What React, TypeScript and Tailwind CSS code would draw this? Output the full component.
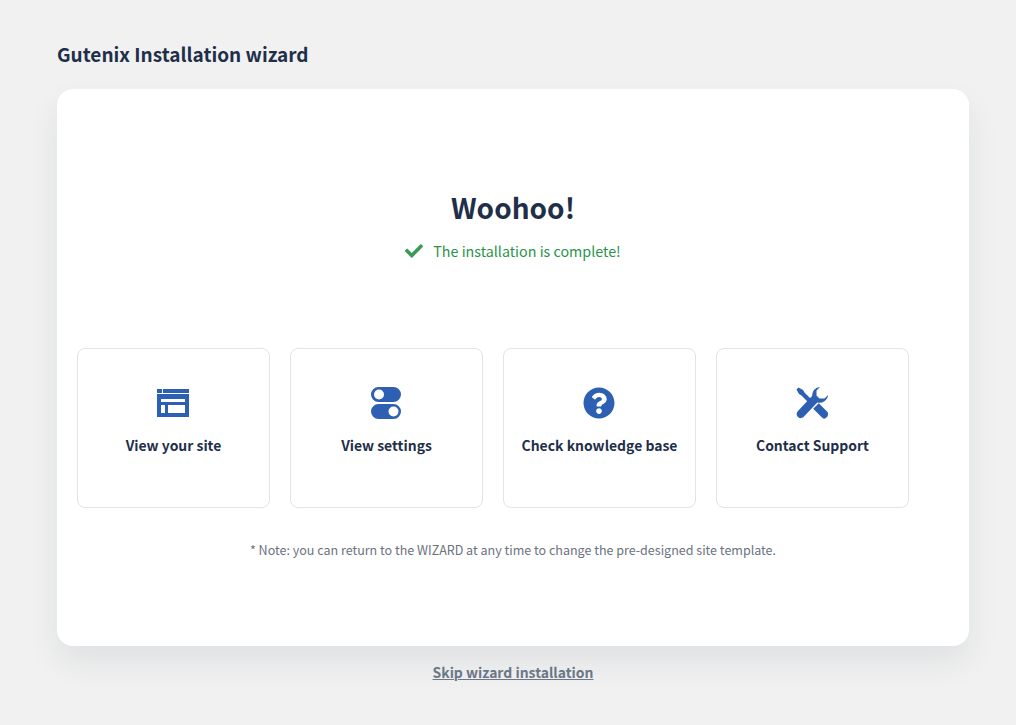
import { FaCheck, FaQuestionCircle } from 'react-icons/fa';

const SiteIcon = () => (
  <svg width="32" height="28" viewBox="0 0 32 28" fill="#2d5fb3">
    <rect x="0" y="0" width="5" height="4" />
    <rect x="6" y="0" width="26" height="4" />
    <path fillRule="evenodd" d="M0 5h32v23H0zM4 10v3h24v-3zM4 16v8h4v-8zM11 16v8h17v-8z" />
  </svg>
);

const ToggleIcon = () => (
  <svg width="30" height="32" viewBox="0 0 30 32" fill="#2d5fb3">
    <path fillRule="evenodd" d="M7.500 0h15a7.500 7.500 0 0 1 0 15h-15a7.500 7.500 0 0 1 0-15zM8 2.500a5 5 0 1 0 0 10a5 5 0 0 0 0-10z" />
    <path fillRule="evenodd" d="M7.500 17h15a7.500 7.500 0 0 1 0 15h-15a7.500 7.500 0 0 1 0-15zM22.500 19.500a5 5 0 1 0 0 10a5 5 0 0 0 0-10z" />
  </svg>
);

const ToolsIcon = () => (
  <svg width="32" height="32" viewBox="0 0 32 32" fill="#2d5fb3">
    <path d="M0.500 2.500L2.500 0.500L7 3L8.500 5.500L15 12L12 15L5.500 8.500L3 7z" />
    <path d="M22.800 16.200L31.500 25Q33 28 30.500 30.500Q28 33 25.500 30L17.200 21.800z" />
    <path d="M24 0L20.500 3.500V8.500L23.500 11.500H28.500L32 8A8.500 8.500 0 0 1 21.300 15.500L7.500 30Q5 32 2.500 30.500L1.500 29.500Q-0.200 27 1.500 24.500L16.100 9A8.500 8.500 0 0 1 24 0z" />
  </svg>
);

const LINKS = [
  { label: 'View your site', icon: <SiteIcon /> },
  { label: 'View settings', icon: <ToggleIcon /> },
  { label: 'Check knowledge base', icon: <FaQuestionCircle size={32} color="#2d5fb3" /> },
  { label: 'Contact Support', icon: <ToolsIcon /> },
];

export default function App() {
  return (
    <div className="min-h-[725px] bg-[#f1f1f1] pl-[57px] pr-[47px] pt-[39px] font-['Noto_Sans_CJK_SC','Liberation_Sans',sans-serif]">
      <h1 className="text-[19px] leading-[29px] font-semibold text-[#1f2f4a]">Gutenix Installation wizard</h1>

      <div className="mt-[21px] h-[557px] rounded-2xl bg-white shadow-[0_16px_32px_rgba(30,40,70,0.08)] px-[20px] pt-[96px]">
        <h2 className="text-center text-[28px] leading-[44px] font-semibold text-[#1f2f4a]">Woohoo!</h2>
        <div className="mt-[10px] flex items-center justify-center gap-[10px] text-[14.3px] leading-6 text-[#2b9348]">
          <FaCheck size={18} color="#3a9b57" />
          <span>The installation is complete!</span>
        </div>

        <div className="mt-[85px] flex gap-[20px]">
          {LINKS.map((link) => (
            <div key={link.label} className="flex h-[160px] w-[193px] flex-col items-center rounded-lg border border-[#e2e4ec] pt-[38px]">
              <div className="mr-px flex h-[32px] items-center justify-center">{link.icon}</div>
              <div className="mt-[15px] text-[13.95px] leading-[22px] font-semibold text-[#1f2f4a]">{link.label}</div>
            </div>
          ))}
        </div>

        <p className="mt-[31px] text-center text-[12.52px] leading-[21px] text-[#6b7280]">* Note: you can return to the WIZARD at any time to change the pre-designed site template.</p>
      </div>

      <div className="mt-[13px] text-center">
        <a href="#" className="text-[13.95px] leading-[22px] font-semibold text-[#6b7686] underline">Skip wizard installation</a>
      </div>
    </div>
  );
}
